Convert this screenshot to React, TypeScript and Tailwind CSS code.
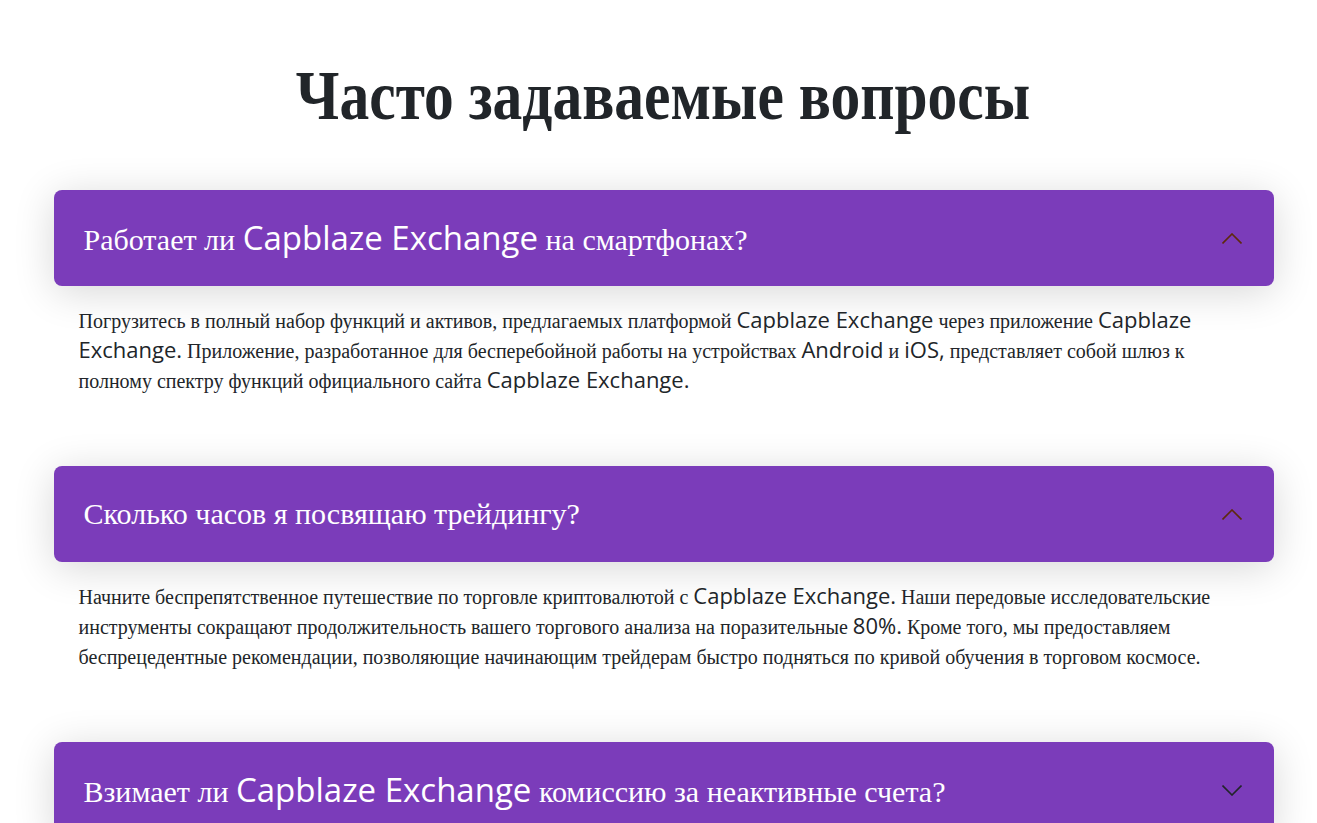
import { ReactNode } from 'react';

const serif = '"Liberation Serif", "Times New Roman", serif';
const sans = '"Open Sans", "Noto Sans", sans-serif';

// latin words render in a wider geometric sans in the original
function L({ children }: { children: ReactNode }) {
  return (
    <span className="text-[1.1em] leading-none" style={{ fontFamily: sans }}>
      {children}
    </span>
  );
}

function Chevron({ open }: { open: boolean }) {
  return (
    <svg
      width="20"
      height="11"
      viewBox="0 0 20 11"
      fill="none"
      stroke={open ? '#5e2a0c' : '#212529'}
      strokeWidth="1.6"
      className="shrink-0"
    >
      {open ? <path d="M0.5 10.5 L10 1 L19.5 10.5" /> : <path d="M0.5 0.5 L10 10 L19.5 0.5" />}
    </svg>
  );
}

type Item = { q: ReactNode; a?: ReactNode; open: boolean };

const items: Item[] = [
  {
    open: true,
    q: (
      <>
        Работает ли <L>Capblaze Exchange</L> на смартфонах?
      </>
    ),
    a: (
      <>
        Погрузитесь в полный набор функций и активов, предлагаемых платформой <L>Capblaze Exchange</L> через
        приложение <L>Capblaze Exchange.</L> Приложение, разработанное для бесперебойной работы на устройствах{' '}
        <L>Android</L> и <L>iOS,</L> представляет собой шлюз к полному спектру функций официального сайта{' '}
        <L>Capblaze Exchange.</L>
      </>
    ),
  },
  {
    open: true,
    q: <>Сколько часов я посвящаю трейдингу?</>,
    a: (
      <>
        Начните беспрепятственное путешествие по торговле криптовалютой с <L>Capblaze Exchange.</L> Наши передовые
        исследовательские инструменты сокращают продолжительность вашего торгового анализа на поразительные{' '}
        <L>80%.</L> Кроме того, мы предоставляем беспрецедентные рекомендации, позволяющие начинающим трейдерам
        быстро подняться по кривой обучения в торговом космосе.
      </>
    ),
  },
  {
    open: false,
    q: (
      <>
        Взимает ли <L>Capblaze Exchange</L> комиссию за неактивные счета?
      </>
    ),
  },
];

export default function App() {
  return (
    <div className="min-h-screen bg-white text-[#212529]" style={{ fontFamily: serif }}>
      <div className="flex justify-center pl-[10px]">
        <div className="w-[1220px] pt-[58px]">
          <div className="mb-[56px] text-center">
            <h1 className="inline-block origin-center scale-x-[0.85] text-[70px] font-bold leading-[76px]">
              Часто задаваемые вопросы
            </h1>
          </div>

          <div className="flex flex-col">
            {items.map((item, i) => (
              <div key={i}>
                <div className="flex h-[96px] items-center justify-between rounded-lg bg-[#7b3cba] pl-[30px] pr-[32px] shadow-[0_6px_40px_rgba(0,0,0,0.16)]">
                  <span className="text-[30px] leading-none text-white">{item.q}</span>
                  <Chevron open={item.open} />
                </div>
                {item.open && item.a && (
                  <div className="px-[25px] pt-5 pb-[70px]">
                    <p className="text-[20px] leading-[30px]">{item.a}</p>
                  </div>
                )}
              </div>
            ))}
          </div>
        </div>
      </div>
    </div>
  );
}
